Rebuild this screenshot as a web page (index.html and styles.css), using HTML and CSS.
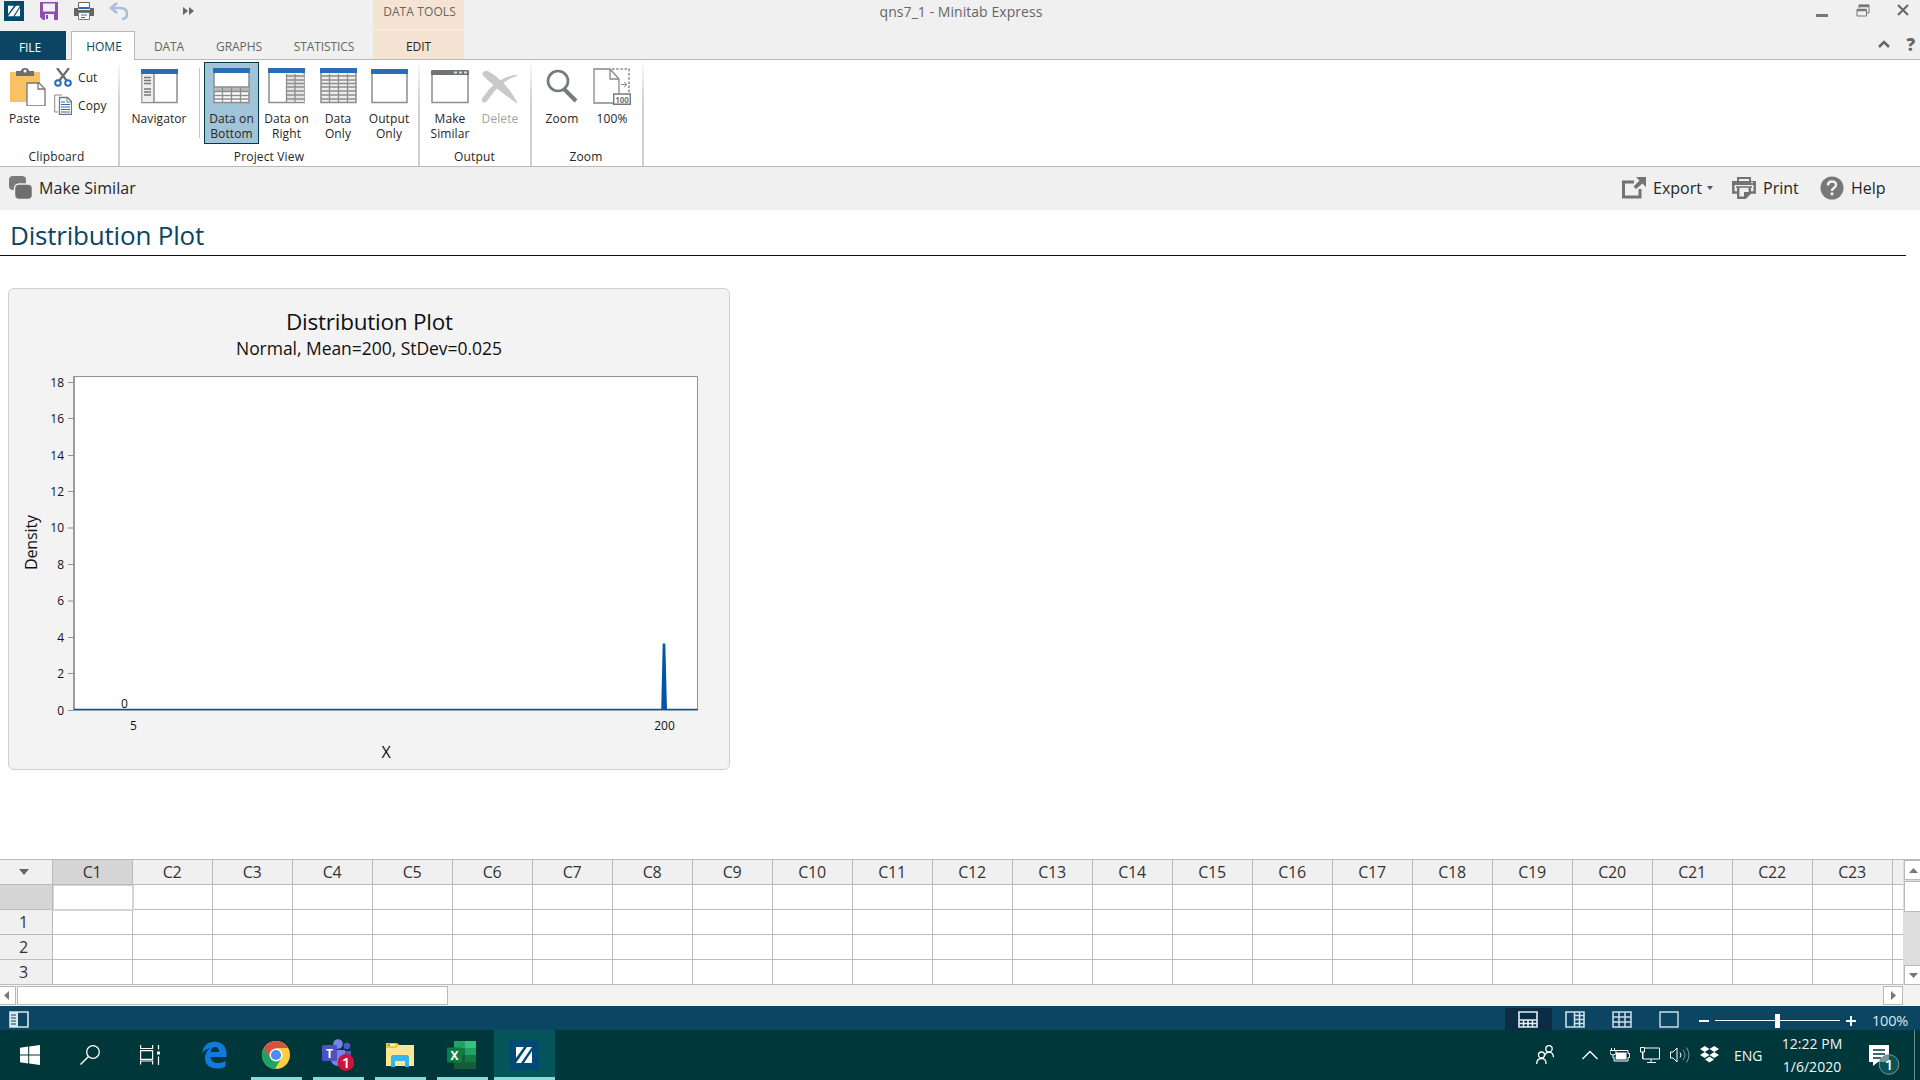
FILE: index.html
```html
<!DOCTYPE html>
<html lang="en">
<head>
<meta charset="utf-8">
<title>qns7_1 - Minitab Express</title>
<link rel="stylesheet" href="styles.css">
</head>
<body>
<header class="titlebar">
  <div class="quick">
    <svg class="q-logo" width="20" height="20" viewBox="0 0 30 30"><rect width="30" height="30" fill="#004b6b"/><path d="M6 7h9L6 20zM14 23h-8L18 7h6zM24 10v13h-8z" fill="#fff"/></svg>
    <svg class="q-save" width="18" height="18" viewBox="0 0 18 18"><path d="M0 0h18v18H3l-3-3z" fill="#8e4db5"/><path d="M3 1.500h12v8H3zM5 12h9v6H5z" fill="#f4f0f6"/><path d="M6 13h2v4H6z" fill="#8e4db5"/></svg>
    <svg class="q-print" width="20" height="18" viewBox="0 0 20 18"><path d="M4.500.5h11v6h-11z" fill="#fff" stroke="#666"/><path d="M5 5h10v2H5z" fill="#2a6cb7"/><path d="M0 6h4v2h12V6h4v8H0z" fill="#666"/><path d="M4.500 10.500h11v7h-11z" fill="#fff" stroke="#777"/><path d="M7 13h6M7 15.500h4" stroke="#2a6cb7"/></svg>
    <svg class="q-undo" width="20" height="18" viewBox="0 0 20 18"><path d="M8 1L2 6l6 5M2 6h9c4 0 7 2 7 6 0 3-2 5-5 5" fill="none" stroke="#a7bfdb" stroke-width="2.600"/></svg>
    <svg class="q-more" width="11" height="8" viewBox="0 0 11 8"><path d="M0 0l5 4-5 4zM6 0l5 4-5 4z" fill="#666"/></svg>
  </div>
  <div class="wintitle">qns7_1 - Minitab Express</div>
  <div class="winbtns">
    <svg width="14" height="16" viewBox="0 0 14 16"><path d="M1 12h12v3H1z" fill="#777"/></svg>
    <svg width="14" height="14" viewBox="0 0 14 14"><path d="M3 1h10v8h-2M3 1v3" fill="none" stroke="#777"/><path d="M3 2h10M1 6h9" stroke="#777" stroke-width="2.500"/><path d="M1 5.500h9.500v6.500H1z" fill="none" stroke="#777"/></svg>
    <svg width="12" height="12" viewBox="0 0 12 12"><path d="M1 1l10 10M11 1L1 11" stroke="#666" stroke-width="2"/></svg>
  </div>
</header>
<nav class="tabs">
  <span class="tab file">FILE</span>
  <span class="tab home">HOME</span>
  <span class="tab t-data">DATA</span>
  <span class="tab t-graphs">GRAPHS</span>
  <span class="tab t-stat">STATISTICS</span>
  <div class="context"><span class="ctx-top">DATA TOOLS</span><span class="ctx-tab">EDIT</span></div>
  <div class="tabend">
    <svg width="12" height="8" viewBox="0 0 12 8"><path d="M1 7l5-5 5 5" fill="none" stroke="#666" stroke-width="2.500"/></svg>
    <b>?</b>
  </div>
</nav>

<section class="ribbon">
  <div class="group g-clip">
    <div class="cmds">
      <div class="cmd w-paste">
        <svg width="36" height="38" viewBox="0 0 36 38"><path d="M0 4h30v30H0z" fill="#f8c163"/><path d="M6 8V3h5q0-3 4-3t4 3h5v5z" fill="#6b6f6f"/><circle cx="15" cy="3" r="1.500" fill="#fff"/><path d="M17 15h12l6 6v17H17z" fill="#fff" stroke="#777" stroke-width="1.300"/><path d="M28 14v7h7" fill="none" stroke="#777" stroke-width="1.300"/></svg>
        <span>Paste</span>
      </div>
      <div class="smalls">
        <div class="small"><svg width="18" height="19" viewBox="0 0 18 19"><path d="M3 0l10 13M15 0L5 13" stroke="#6b6f6f" stroke-width="2.300"/><circle cx="4" cy="15" r="2.800" fill="#fff" stroke="#2a6cb7" stroke-width="2"/><circle cx="14" cy="15" r="2.800" fill="#fff" stroke="#2a6cb7" stroke-width="2"/></svg>Cut</div>
        <div class="small copy"><svg width="18" height="21" viewBox="0 0 18 21"><path d="M8 1H.7v17H4" fill="none" stroke="#888"/><path d="M5.500 3.500h8l4 4v13h-12z" fill="#fff" stroke="#777" stroke-width="1.300"/><path d="M13 3v5h4" fill="none" stroke="#777"/><path d="M7 10.500h9M7 13h9M7 15.500h9M7 18h9M7 8h4" stroke="#2a6cb7"/></svg>Copy</div>
      </div>
    </div>
    <div class="glabel">Clipboard</div>
  </div>
  <div class="group g-view">
    <div class="cmds">
      <div class="cmd w-nav">
        <svg width="37" height="36" viewBox="0 0 37 36"><path d="M1 2h35v32.500H1z" fill="#fff" stroke="#8d8d8d" stroke-width="1.500"/><path d="M1.500 5h11v29h-11z" fill="#eee"/><path d="M13 5v29" stroke="#8d8d8d" stroke-width="1.500"/><path d="M3 9.500h7M3 12.500h7M3 15.500h7M3 21h7M3 24h7M3 27h7" stroke="#777" stroke-width="1.300"/><path d="M0 1h37v5H0z" fill="#2a6cb7"/></svg>
        <span>Navigator</span>
      </div>
      <i class="vsep"></i>
      <div class="cmd w-bottom active">
        <svg width="37" height="36" viewBox="0 0 37 36"><path d="M1 2h35v32.500H1z" fill="#fff" stroke="#8d8d8d" stroke-width="1.500"/><path d="M1 19h35v4.500H1z" fill="#b9b9b9"/><path d="M1 19h35M1 23.500h35M1 27.500h35M1 31h35M9.500 19v15M18.500 19v15M27.500 19v15" stroke="#8d8d8d" stroke-width="1.300"/><path d="M0 0h37v5H0z" fill="#2a6cb7"/></svg>
        <span>Data on<br>Bottom</span>
      </div>
      <div class="cmd w-right">
        <svg width="37" height="36" viewBox="0 0 37 36"><path d="M1 2h35v32.500H1z" fill="#fff" stroke="#8d8d8d" stroke-width="1.500"/><path d="M18 6h18v28H18z" fill="#e4e4e4"/><path d="M18.500 8h18M18.500 12h18M18.500 15.500h18M18.500 19h18M18.500 23h18M18.500 27h18M18.500 31h18M18.500 6v28M27 6v28" stroke="#8d8d8d" stroke-width="1.300"/><path d="M0 0h37v5H0z" fill="#2a6cb7"/></svg>
        <span>Data on<br>Right</span>
      </div>
      <div class="cmd w-only">
        <svg width="37" height="36" viewBox="0 0 37 36"><path d="M1 2h35v32.500H1z" fill="#eee" stroke="#8d8d8d" stroke-width="1.500"/><path d="M1 8h35M1 12h35M1 15.500h35M1 19h35M1 23h35M1 27h35M1 31h35M9.500 6v28M18.500 6v28M27.500 6v28" stroke="#8d8d8d" stroke-width="1.300"/><path d="M0 0h37v5H0z" fill="#2a6cb7"/></svg>
        <span>Data<br>Only</span>
      </div>
      <div class="cmd w-output">
        <svg width="37" height="36" viewBox="0 0 37 36"><path d="M1 2h35v32.500H1z" fill="#fff" stroke="#8d8d8d" stroke-width="1.500"/><path d="M0 1h37v5H0z" fill="#2a6cb7"/></svg>
        <span>Output<br>Only</span>
      </div>
    </div>
    <div class="glabel">Project View</div>
  </div>
  <div class="group g-out">
    <div class="cmds">
      <div class="cmd w-similar">
        <svg width="38" height="36" viewBox="0 0 38 36"><path d="M1 3h36v31.500H1z" fill="#fff" stroke="#8d8d8d" stroke-width="1.500"/><path d="M0 7V4q0-2 2-2h34q2 0 2 2v3z" fill="#6f7372"/><path d="M23 4.500h3M28 4.500h3M33 4.500h3" stroke="#ddd" stroke-width="2"/></svg>
        <span>Make<br>Similar</span>
      </div>
      <div class="cmd w-delete disabled">
        <svg width="36" height="36" viewBox="0 0 36 36"><path d="M1 5q2-3 6-1 18 11 28 31Q18 24 1 7zM35 7Q18 13 6 31q-2 4-5 3-1-2 0-4Q13 10 35 7z" fill="#c9c9c9" stroke="#c9c9c9"/></svg>
        <span>Delete</span>
      </div>
    </div>
    <div class="glabel">Output</div>
  </div>
  <div class="group g-zoom">
    <div class="cmds">
      <div class="cmd w-zoom">
        <svg width="32" height="36" viewBox="0 0 32 36"><circle cx="12" cy="13" r="10" fill="none" stroke="#777b7b" stroke-width="2.700"/><path d="M18 21l12 12" stroke="#777b7b" stroke-width="4"/></svg>
        <span>Zoom</span>
      </div>
      <div class="cmd w-zoom">
        <svg width="38" height="38" viewBox="0 0 38 38"><path d="M20 35H1V1h16l9 10v14M17 1v10h9" fill="none" stroke="#888" stroke-width="1.300"/><path d="M19 1h17v24" fill="none" stroke="#888" stroke-width="1.500" stroke-dasharray="2.500 1.700"/><path d="M28 16.500h5M31 14l3 2.500-3 2.500" fill="none" stroke="#888"/><path d="M20.700 26h16.600v10.300H20.700z" fill="#fff" stroke="#777" stroke-width="1.400"/><text x="29" y="34.500" text-anchor="middle" class="tiny">100</text></svg>
        <span>100%</span>
      </div>
    </div>
    <div class="glabel">Zoom</div>
  </div>
</section>

<div class="toolbar">
  <svg width="24" height="24" viewBox="0 0 24 24"><rect x="0" y="0" width="17" height="14" rx="4" fill="#7a7a7a"/><rect x="5.500" y="8" width="18" height="15.500" rx="4.500" fill="#6e6e6e" stroke="#f0f0f0" stroke-width="1.500"/></svg>
  <span class="tb-similar">Make Similar</span>
  <div class="tb-right">
    <svg width="24" height="22" viewBox="0 0 24 22"><path d="M12 5H1.500v15H18v-8" fill="none" stroke="#737373" stroke-width="3"/><path d="M14 0h10v10l-3.500-3.500L14 12l-2.500-2.500 6-6z" fill="#737373"/></svg>
    <span class="tb-export">Export</span>
    <svg class="dd" width="6" height="4" viewBox="0 0 6 4"><path d="M0 0h6L3 4z" fill="#555"/></svg>
    <svg class="tb-pi" width="24" height="22" viewBox="0 0 24 22"><path d="M6 4V1h12v3" fill="none" stroke="#737373" stroke-width="2"/><path d="M0 4h24v4H0z" fill="#737373"/><path d="M1.300 8v7.500H6M22.700 8v7.500H18" fill="none" stroke="#737373" stroke-width="2.500"/><path d="M6.200 10.500V20.700h7l4.600-4.500v-5.700" fill="none" stroke="#737373" stroke-width="2.400"/><path d="M4 10h16" stroke="#737373" stroke-width="1.600"/><path d="M12 21v-6h6z" fill="#737373"/><path d="M19 5.500h2" stroke="#f0f0f0"/></svg>
    <span class="tb-print">Print</span>
    <svg class="tb-hi" width="24" height="24" viewBox="0 0 24 24"><circle cx="12" cy="12" r="11.500" fill="#777"/><path d="M8 9.500q0-4 4-4t4 3.500q0 2-2.500 3.300-1.500.8-1.500 2.700" fill="none" stroke="#f0f0f0" stroke-width="2.500"/><path d="M10.600 16.500h2.800v2.800h-2.800z" fill="#f0f0f0"/></svg>
    <span class="tb-help">Help</span>
  </div>
</div>

<main class="output">
  <h1>Distribution Plot</h1>
  <div class="card">
    <svg class="chart" width="720" height="480" viewBox="9 289 720 480">
      <text class="c-title" x="369.500" y="330" text-anchor="middle" textLength="167">Distribution Plot</text>
      <text class="c-sub" x="369" y="355" text-anchor="middle" textLength="266">Normal, Mean=200, StDev=0.025</text>
      <path d="M74 376.500h623.500V710H74z" fill="#fff" stroke="#929292"/>
      <path d="M74 376v334.500" stroke="#929292" stroke-width="1.600"/>
      <path d="M68 382.500h6M68 418.500h6M68 455.500h6M68 491.500h6M68 528h6M68 564.500h6M68 601h6M68 637.500h6M68 673.500h6M68 710.500h6" stroke="#929292" stroke-width="1.200"/>
      <g class="c-tick" text-anchor="end">
        <text x="64" y="387">18</text><text x="64" y="423">16</text><text x="64" y="460">14</text><text x="64" y="496">12</text><text x="64" y="532">10</text><text x="64" y="569">8</text><text x="64" y="605">6</text><text x="64" y="642">4</text><text x="64" y="678">2</text><text x="64" y="715">0</text>
      </g>
      <g class="c-tick" text-anchor="middle"><text x="124.500" y="708">0</text><text x="133.500" y="730">5</text><text x="664.500" y="730">200</text></g>
      <path d="M74 709.500h624" stroke="#0055a5" stroke-width="1.500"/>
      <path d="M661.200 710l1.500-66.500h2.600l1.700 66.500z" fill="#0055a5"/>
      <text class="c-axis" x="386" y="758" text-anchor="middle">X</text>
      <text class="c-axis" transform="translate(37 542.500) rotate(-90)" text-anchor="middle" textLength="55">Density</text>
    </svg>
  </div>
</main>

<section class="sheet">
  <div class="sheet-main">
    <div class="heads">
      <span class="corner"><svg width="10" height="6" viewBox="0 0 10 6"><path d="M0 0h10L5 6z" fill="#666"/></svg></span>
      <span class="on">C1</span><span>C2</span><span>C3</span><span>C4</span><span>C5</span><span>C6</span><span>C7</span><span>C8</span><span>C9</span><span>C10</span><span>C11</span><span>C12</span><span>C13</span><span>C14</span><span>C15</span><span>C16</span><span>C17</span><span>C18</span><span>C19</span><span>C20</span><span>C21</span><span>C22</span><span>C23</span>
    </div>
    <div class="row"><span class="rh on"></span><span class="cell-on"></span></div>
    <div class="row"><span class="rh">1</span></div>
    <div class="row"><span class="rh">2</span></div>
    <div class="row"><span class="rh">3</span></div>
  </div>
  <div class="vscroll">
    <span class="sbtn"><svg width="9" height="5" viewBox="0 0 9 5"><path d="M0 5h9L4.500 0z" fill="#777"/></svg></span>
    <span class="vthumb"></span>
    <span class="sbtn down"><svg width="9" height="5" viewBox="0 0 9 5"><path d="M0 0h9L4.500 5z" fill="#777"/></svg></span>
  </div>
</section>
<div class="hscroll">
  <span class="hbtn left"><svg width="5" height="9" viewBox="0 0 5 9"><path d="M5 0v9L0 4.500z" fill="#777"/></svg></span>
  <span class="hthumb"></span>
  <span class="hbtn right"><svg width="5" height="9" viewBox="0 0 5 9"><path d="M0 0v9l5-4.500z" fill="#777"/></svg></span>
</div>

<div class="status">
  <svg class="st-nav" width="20" height="17" viewBox="0 0 20 17"><path d="M1 1h18v15H1z" fill="none" stroke="#d9e6ec" stroke-width="1.600"/><path d="M1 1h8v15H1z" fill="#d9e6ec"/><path d="M2 4h5M2 7h5M2 10h5M2 13h5" stroke="#0b4562"/></svg>
  <div class="views">
    <span class="v on"><svg width="20" height="17" viewBox="0 0 20 17"><path d="M1 1h18v15H1zM1 9h18M1 12.500h18M5.500 9v7M10 9v7M14.500 9v7" fill="none" stroke="#e5eef2" stroke-width="1.600"/></svg></span>
    <span class="v"><svg width="20" height="17" viewBox="0 0 20 17"><path d="M1 1h18v15H1zM9.500 1v15M14.500 1v15M9 4.500h10M9 8.500h10M9 12.500h10" fill="none" stroke="#cfdfe6" stroke-width="1.600"/></svg></span>
    <span class="v"><svg width="20" height="17" viewBox="0 0 20 17"><path d="M1 1h18v15H1zM7 1v15M13 1v15M1 6h18M1 11h18" fill="none" stroke="#cfdfe6" stroke-width="1.500"/></svg></span>
    <span class="v"><svg width="20" height="17" viewBox="0 0 20 17"><path d="M1 1h18v15H1z" fill="none" stroke="#cfdfe6" stroke-width="1.400"/></svg></span>
  </div>
  <svg class="slider" width="158" height="16" viewBox="0 0 158 16"><path d="M0 8h10M147 8h10M152 3v10" stroke="#fff" stroke-width="2"/><path d="M16 7.500h125" stroke="#fff"/><path d="M76 1h5v14h-5z" fill="#fff"/></svg>
  <span class="pct">100%</span>
</div>

<footer class="taskbar">
  <div class="apps">
    <span class="sys"><svg width="20" height="20" viewBox="0 0 20 20"><path d="M0 2.800l8.200-1.200v7.900H0zM9.200 1.500L20 0v9.500H9.200zM0 10.500h8.200v7.900L0 17.200zM9.200 10.500H20V20L9.200 18.500z" fill="#fff"/></svg></span>
    <span class="sys"><svg width="20" height="20" viewBox="0 0 20 20"><circle cx="13" cy="7" r="6.300" fill="none" stroke="#fff" stroke-width="1.300"/><path d="M8.500 11.500L.5 19.500" stroke="#fff" stroke-width="1.400"/></svg></span>
    <span class="sys view"><svg width="20" height="20" viewBox="0 0 20 20"><path d="M.6 0v3.500h12V0M.6 19.500V16h12v3.500M.6 5.600h12v8.800H.6zM18.500 0v4.500M18.500 11.500V20" fill="none" stroke="#fff" stroke-width="1.200"/><path d="M17 6.500h3v3h-3z" fill="#fff"/></svg></span>
    <span class="app edge"><svg width="25" height="28" viewBox="0 0 25 28"><path d="M.2 12.500C1 5 5.500.7 12.500.7c8 0 12 5.300 12 12.300v3H8.500c.3 4 3.500 6 7.500 6 3 0 5.500-.8 7.500-2v5.500c-2.500 1.500-5.300 2-8.300 2C7.500 27.500 3 23.500 3 17c0-4.500 2.200-8 6-10-4 .5-7 2.500-8.800 5.500zM8.600 11h8.600c0-3-1.600-5-4-5-2.300 0-4 1.800-4.600 5z" fill="#0f7bdc"/></svg></span>
    <span class="app run"><svg width="28" height="28" viewBox="0 0 28 28"><circle cx="14" cy="14" r="14" fill="#fc4"/><path d="M14 14L1.900 7A14 14 0 0 1 26.100 7H14z" fill="#d85140"/><path d="M1.900 7A14 14 0 0 0 13 28l6.500-11H8z" fill="#1ea362"/><path d="M1.900 7l6 10.500L14 7z" fill="#d85140"/><path d="M1.900 7l6.300 10.700 5.600 2L13 28A14 14 0 0 1 1.900 7z" fill="#1ea362"/><circle cx="14" cy="14" r="6.500" fill="#fff"/><circle cx="14" cy="14" r="5.100" fill="#4c8bf5"/></svg></span>
    <span class="app run teams"><svg width="32" height="32" viewBox="0 0 32 32"><circle cx="16" cy="5" r="4.800" fill="#7b83eb"/><circle cx="25" cy="7" r="3.300" fill="#5059c9"/><path d="M20 12h9v10q-2 4-9 4z" fill="#5059c9"/><path d="M9 11h14v10q-1 6-7 6-7-1-7-7z" fill="#7b83eb"/><rect y="6" width="15" height="16" rx="1" fill="#4b53bc"/><text x="7.500" y="18.500" text-anchor="middle" class="letter">T</text><circle cx="24" cy="23.500" r="8.400" fill="#cc1339"/><text x="24" y="29" text-anchor="middle" class="badge">1</text></svg></span>
    <span class="app run"><svg width="28" height="24" viewBox="0 0 28 24"><path d="M0 0h10l3 2h15v21H0z" fill="#ffe693"/><path d="M0 0h11l2 2-3 3H0z" fill="#f9c52c"/><path d="M2 2h7" stroke="#fff" stroke-width="1.500"/><path d="M2 2h2" stroke="#1c8fdc" stroke-width="1.500"/><path d="M5 24V14q0-2 2-2h14q2 0 2 2v10h-4v-6H9v6z" fill="#39b5ea"/></svg></span>
    <span class="app run"><svg width="29" height="28" viewBox="0 0 29 28"><path d="M7 0h11v7H7z" fill="#21a366"/><path d="M18 0h11v7H18z" fill="#33c481"/><path d="M7 7h11v7H7z" fill="#107c41"/><path d="M18 7h11v7H18z" fill="#21a366"/><path d="M7 14h11v7H7zM7 21h22v7H7z" fill="#185c37"/><path d="M18 14h11v7H18z" fill="#107c41"/><rect y="6.500" width="15" height="15" rx="1" fill="#107c41"/><text x="7.500" y="18.500" text-anchor="middle" class="letter">X</text></svg></span>
    <span class="app run current"><svg width="30" height="30" viewBox="0 0 30 30"><rect width="30" height="30" fill="#004b74"/><path d="M7 7h8L7 18zM12 23H7L18 7h5zM23 11v12h-8z" fill="#fff"/></svg></span>
  </div>
  <div class="tray">
    <svg class="people" width="18" height="20" viewBox="0 0 18 20"><circle cx="5.500" cy="10" r="3" fill="none" stroke="#fff" stroke-width="1.300"/><circle cx="13" cy="3.800" r="3.200" fill="none" stroke="#fff" stroke-width="1.300"/><path d="M.7 19q0-5.500 4.800-5.500T10 19M8.500 10.500Q10 7.200 13 7.200q4 0 4.500 5" fill="none" stroke="#fff" stroke-width="1.300"/></svg>
    <svg class="chev" width="16" height="10" viewBox="0 0 16 10"><path d="M.5 9L8 1.500 15.500 9" fill="none" stroke="#fff" stroke-width="1.300"/></svg>
    <svg class="batt" width="20" height="14" viewBox="0 0 20 14"><path d="M6 2.500h12v3h1.500v4H18V13H4V9" fill="none" stroke="#fff"/><path d="M6 4.500H16.500V11.500H5.500z" fill="#fff"/><path d="M0 2.500h6v2Q6 7 3 7T0 4.500zM1.500 0v2M4.500 0v2M3 7v3" fill="none" stroke="#fff"/></svg>
    <svg class="net" width="20" height="16" viewBox="0 0 20 16"><path d="M5 1h14.500v11H3V5M11 12v3M7 15.500h9" fill="none" stroke="#fff"/><path d="M.5.500h4v4.500h-4zM2.500 5v7" fill="none" stroke="#fff"/></svg>
    <svg class="vol" width="20" height="18" viewBox="0 0 20 18"><path d="M.5 6h2.500l4-4v14l-4-4H.5z" fill="none" stroke="#fff"/><path d="M10 6.500q2 2.500 0 5" fill="none" stroke="#fff"/><path d="M13 4q4 5 0 10M16.500 1.500q5 7.500 0 15" fill="none" stroke="#7f9a9b"/></svg>
    <svg class="drop" width="19" height="17" viewBox="0 0 19 17"><path d="M4.800 0l4.700 3-4.700 3L0 3zM14.200 0L19 3l-4.800 3-4.700-3zM4.800 6l4.700 3-4.700 3L0 9zM14.200 6L19 9l-4.800 3-4.700-3zM9.500 10.500l4.500 3-4.500 3-4.500-3z" fill="#fff"/></svg>
    <span class="lang">ENG</span>
    <span class="clock">12:22 PM<br>1/6/2020</span>
    <svg class="note" width="31" height="30" viewBox="0 0 31 30"><path d="M0 0h20v17H9l-5 4v-4H0z" fill="#fff"/><path d="M4 5h12M4 9h12M4 13h8" stroke="#00373a" stroke-width="1.300"/><circle cx="20" cy="19.500" r="9.800" fill="#0c5356" stroke="#77999a"/><path d="M11 16q3-6 9-6v7h-9z" fill="#73999a"/><text x="20" y="25" text-anchor="middle" class="badge">1</text></svg>
    <i class="desk"></i>
  </div>
</footer>
</body>
</html>
```
FILE: styles.css
```css
* { box-sizing: border-box; }
body {
  margin: 0;
  width: 1920px;
  height: 1080px;
  overflow: hidden;
  display: flex;
  flex-direction: column;
  background: #fff;
  color: #262626;
  font-family: "Open Sans", "Noto Sans", sans-serif;
  font-size: 12px;
}
svg { display: block; flex: none; }

/* title bar */
.titlebar {
  height: 31px;
  background: #f0f0f0;
  display: grid;
  grid-template-columns: 860px 202px 1fr;
}
.quick { display: flex; padding-top: 2px; }
.q-logo { margin: -1px 0 0 4px; }
.q-save { margin-left: 16px; }
.q-print { margin-left: 16px; }
.q-undo { margin-left: 15px; }
.q-more { margin: 5px 0 0 54px; }
.wintitle { text-align: center; font-size: 14px; line-height: 24px; color: #666; letter-spacing: 0.05px; white-space: nowrap; }
.winbtns { display: flex; justify-content: flex-end; gap: 27px; padding: 4px 11px 0 0; }
.winbtns svg:first-child { margin-top: -2px; }

/* ribbon tabs */
.tabs { height: 29px; flex: none; background: #f0f0f0; border-bottom: 1px solid #b9b9b9; display: flex; color: #666; }
.tab { height: 29px; line-height: 31px; text-align: center; letter-spacing: -0.1px; }
.file { width: 66px; background: #0b4562; color: #fff; margin-right: 5px; line-height: 33px; padding-right: 6px; }
.home { width: 64px; background: #fff; border: 1px solid #b9b9b9; border-bottom: 0; color: #0b4562; line-height: 30px; padding-left: 2px; letter-spacing: 0; }
.t-data { width: 68px; }
.t-graphs { width: 72px; }
.t-stat { width: 98px; }
.context { width: 91px; height: 59px; margin-top: -31px; background: #f5e4d3; text-align: center; letter-spacing: -0.1px; }
.ctx-top { display: block; height: 30px; line-height: 24px; border-bottom: 1px solid #f9efe5; padding-left: 2px; letter-spacing: 0.1px; }
.ctx-tab { display: block; line-height: 33px; color: #262626; }
.tabend { margin-left: auto; display: flex; gap: 16px; padding: 9px 5px 0 0; color: #666; }
.tabend b { font-size: 17px; line-height: 9px; font-weight: 800; }

/* ribbon */
.ribbon { height: 107px; flex: none; display: flex; border-bottom: 1px solid #b9b9b9; }
.group { display: flex; flex-direction: column; border-right: 2px solid; border-image: linear-gradient(#fff, #d0d0d0 40%, #d0d0d0) 1; }
.g-clip { width: 120px; }
.g-view { width: 300px; }
.g-out { width: 112px; }
.g-zoom { width: 112px; }
.g-zoom .cmds { padding-left: 5px; }
.cmds { display: flex; height: 86px; flex: none; padding-top: 2px; }
.cmd { height: 82px; padding-top: 6px; display: flex; flex-direction: column; align-items: center; text-align: center; line-height: 15px; white-space: nowrap; letter-spacing: 0.1px; }
.cmd svg { height: 38px; margin-bottom: 5px; }
.cmd svg[height="36"] { height: 36px; margin-bottom: 7px; }
.w-paste { width: 52px; }
.w-paste span { margin-right: 3px; }
.w-paste svg { margin-left: 3px; }
.smalls { padding: 4px 0 0 2px; display: flex; flex-direction: column; gap: 6px; }
.small { height: 22px; display: flex; align-items: center; gap: 6px; letter-spacing: 0.1px; }
.small.copy svg { margin: -1px 0 0 0; }
.w-nav { width: 79px; padding-right: 1px; }
.vsep { width: 1px; height: 70px; margin: 6px 4px 0 0; background: #c6c6c6; }
.w-bottom { width: 55px; }
.active { background: #a2c4d8; border: 1px solid #06364c; padding-top: 5px; }
.w-right { width: 55px; }
.w-only { width: 48px; }
.w-output { width: 54px; }
.w-similar { width: 60px; }
.w-delete { width: 40px; }
.w-zoom { width: 50px; }
.disabled { color: #a3a3a3; }
.glabel { height: 20px; text-align: center; line-height: 21px; padding-right: 4px; letter-spacing: 0.15px; }
.g-clip .glabel { padding-right: 5px; }
.g-view .glabel { padding-right: 0; }
.g-out .glabel { padding-right: 1px; }
.g-zoom .glabel { padding-right: 2px; }
.tiny { font: bold 8px "Open Sans", sans-serif; fill: #777; letter-spacing: 0; }

/* output toolbar */
.toolbar { height: 43px; flex: none; background: #f0f0f0; display: flex; align-items: center; padding: 0 33px 1px 9px; font-size: 16px; line-height: 42px; }
.toolbar span { white-space: nowrap; letter-spacing: 0; }
.toolbar .tb-similar { margin-left: 6px; letter-spacing: 0.08px; }
.tb-right { margin-left: auto; display: flex; align-items: center; }
.tb-export { width: 48px; margin-left: 7px; }
.dd { margin-left: 6px; }
.tb-pi { margin-left: 19px; }
.tb-print { width: 35px; margin-left: 7px; }
.tb-hi { margin-left: 22px; }
.tb-help { width: 36px; margin-left: 7px; }

/* output pane */
.output { height: 649px; flex: none; display: flex; flex-direction: column; }
h1 { margin: 0 14px 0 0; height: 46px; padding-left: 10px; font-size: 26px; font-weight: 400; line-height: 50px; color: #0b4562; border-bottom: 1px solid #111; letter-spacing: -0.2px; }
.card { margin: 32px 0 0 8px; width: 722px; height: 482px; border: 1px solid #d0d0d0; border-radius: 6px; background: #f3f3f3; }
.chart text { fill: #111; }
.c-title { font-size: 22.500px; }
.c-sub { font-size: 17.500px; }
.c-tick { font-size: 12px; }
.c-axis { font-size: 16px; }

/* worksheet */
.sheet { height: 126px; flex: none; border-top: 1px solid #b9b9b9; display: flex; background: #f0f0f0; }
.sheet-main { width: 1903px; overflow: hidden; }
.heads { display: flex; height: 25px; border-bottom: 1px solid #b9b9b9; font-size: 16px; line-height: 25px; color: #333; }
.heads span { flex: none; width: 80px; border-right: 1px solid #b9b9b9; text-align: center; padding-right: 1px; letter-spacing: -0.3px; }
.heads .corner { width: 53px; padding: 9px 0 0 19px; }
.on { background: #d5d5d5; }
.row { height: 25px; display: flex; border-bottom: 1px solid #bdbdbd; background: repeating-linear-gradient(90deg, #fff 0 79px, #bdbdbd 79px 80px) 53px 0 / 1920px 25px no-repeat; }
.rh { width: 53px; height: 24px; background-color: #f0f0f0; border-right: 1px solid #b9b9b9; text-align: center; padding-right: 5px; font-size: 16px; line-height: 25px; color: #333; }
.rh.on { background-color: #d5d5d5; }
.cell-on { width: 81px; height: 26px; border: 2px solid #d5d5d5; border-left-width: 1px; border-top-width: 1px; }
.vscroll { width: 17px; padding-left: 1px; display: flex; flex-direction: column; background: #dedede; }
.sbtn { height: 20px; border: 1px solid #b9b9b9; border-right: 0; background: #fff; padding: 7px 0 0 4px; }
.vthumb { height: 31px; margin-top: 1px; border: 1px solid #b9b9b9; border-right: 0; background: #fff; }
.down { margin-top: auto; }
.hscroll { height: 21px; flex: none; background: #f3f3f3; display: flex; padding: 1px 17px 1px 0; }
.hbtn, .hthumb { height: 19px; border: 1px solid #b9b9b9; background: #fff; }
.hbtn { padding: 4px 0 0 7px; }
.left { width: 16px; border-left: 0; padding-left: 4px; }
.hthumb { width: 431px; margin-left: 1px; }
.right { width: 20px; margin-left: auto; }

/* status bar */
.status { height: 24px; flex: none; background: #0b4562; display: flex; padding-left: 9px; color: #dce8ee; }
.st-nav { margin-top: 5px; }
.views { display: flex; margin-left: 1476px; }
.v { width: 47px; height: 22px; margin-top: 2px; padding: 3px 0 0 13px; }
.v.on { background: #0a2c44; }
.slider { margin: 7px 0 0 6px; }
.pct { margin-left: 15px; font-size: 14.500px; line-height: 29px; letter-spacing: -0.2px; }

/* taskbar */
.taskbar { height: 50px; flex: none; background: #00373a; display: flex; color: #f2f6f6; }
.apps { display: flex; gap: 1px; }
.sys, .app { display: flex; justify-content: center; align-items: center; height: 50px; }
.sys { width: 60px; margin-right: -1px; }
.view { margin-right: 3px; }
.app { width: 61px; padding: 0 2px 1px 0; }
.edge { padding-right: 0; }
.edge svg { margin-top: 1px; }
.run { background: linear-gradient(#8adbd8, #8adbd8) 5px 47px / 51px 3px no-repeat; }
.teams { padding-right: 1px; }
.current { background: linear-gradient(#8adbd8, #8adbd8) 0 47px / 61px 3px no-repeat, #05565a; padding-bottom: 0; }
.letter { font: bold 12px "Open Sans", sans-serif; fill: #fff; }
.badge { font: 600 15px "Open Sans", sans-serif; fill: #fff; }
.tray { margin-left: auto; display: flex; }
.people { margin-top: 15px; }
.chev { margin: 20px 0 0 28px; }
.batt { margin: 18px 0 0 12px; }
.net { margin: 17px 0 0 10px; }
.vol { margin: 16px 0 0 10px; }
.drop { margin: 16px 0 0 10px; }
.lang { width: 30px; margin-left: 15px; font-size: 14px; line-height: 51px; letter-spacing: 0; }
.clock { width: 90px; margin-left: 3px; font-size: 14px; line-height: 23px; padding-top: 2px; text-align: center; letter-spacing: 0.05px; }
.note { margin: 15px 0 0 12px; }
.desk { width: 1px; height: 50px; margin: 0 5px 0 14px; background: #6d8a8c; }
```
